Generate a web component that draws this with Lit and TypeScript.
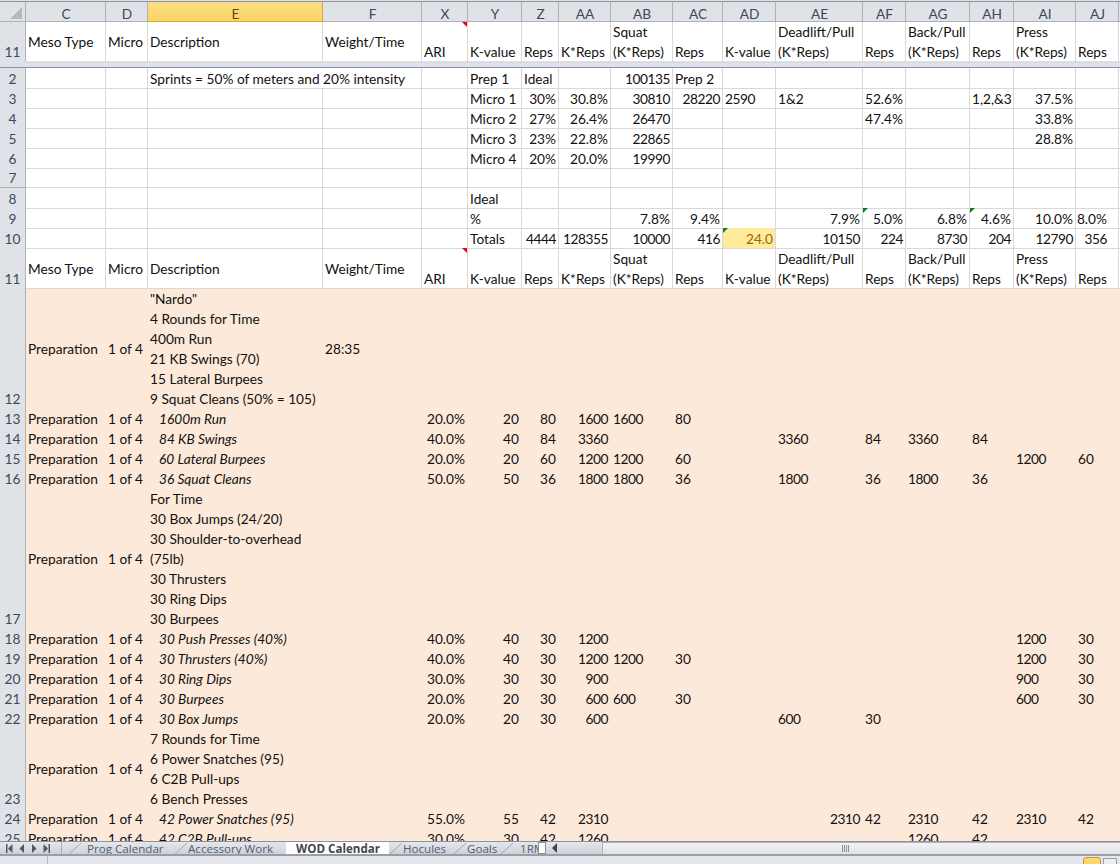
import { LitElement, html, css } from "lit";
import { customElement } from "lit/decorators.js";

const COLS = ["C","D","E","F","X","Y","Z","AA","AB","AC","AD","AE","AF","AG","AH","AI","AJ"];
type Cell = { t: string; a?: "r" | "l"; i?: boolean; cls?: string };
type Row = { n: string; h: number; peach?: boolean; first?: boolean; cells: Record<string, Cell | string> };

const r = (t: string): Cell => ({ t, a: "r" });
const header = (h: number, first = false): Row => ({ n: "11", h, first, cells: {
  C: { t: "Meso Type", cls: "mid" }, D: { t: "Micro", cls: "mid" }, E: { t: "Description", cls: "mid" }, F: { t: "Weight/Time", cls: "mid" },
  X: { t: "ARI", cls: "red" }, Y: "K-value", Z: "Reps", AA: "K*Reps", AB: "Squat\n(K*Reps)", AC: "Reps", AD: "K-value",
  AE: "Deadlift/Pull\n(K*Reps)", AF: "Reps", AG: "Back/Pull\n(K*Reps)", AH: "Reps", AI: "Press\n(K*Reps)", AJ: "Reps",
}});
const wod = (n: string, desc: string, x: string, y: string, z: string, aa: string, rest: Record<string, Cell | string>): Row => ({
  n, h: 20, peach: true, cells: { C: "Preparation", D: "1 of 4", E: { t: desc, i: true }, X: r(x), Y: r(y), Z: r(z), AA: r(aa), ...rest },
});
const block = (n: string, lines: string, h: number, extra: Record<string, Cell | string> = {}): Row => ({
  n, h, peach: true, cells: { C: { t: "Preparation", cls: "mid" }, D: { t: "1 of 4", cls: "mid" }, E: { t: lines, cls: "mid" }, ...extra },
});

const ROWS: Row[] = [
  { n: "2", h: 20, cells: { E: { t: "Sprints = 50% of meters and 20% intensity", cls: "over" }, Y: "Prep 1", Z: "Ideal", AB: r("100135"), AC: "Prep 2" } },
  { n: "3", h: 20, cells: { Y: "Micro 1", Z: r("30%"), AA: r("30.8%"), AB: r("30810"), AC: r("28220"), AD: "2590", AE: "1&2", AF: r("52.6%"), AH: "1,2,&3", AI: r("37.5%") } },
  { n: "4", h: 20, cells: { Y: "Micro 2", Z: r("27%"), AA: r("26.4%"), AB: r("26470"), AF: r("47.4%"), AI: r("33.8%") } },
  { n: "5", h: 20, cells: { Y: "Micro 3", Z: r("23%"), AA: r("22.8%"), AB: r("22865"), AI: r("28.8%") } },
  { n: "6", h: 20, cells: { Y: "Micro 4", Z: r("20%"), AA: r("20.0%"), AB: r("19990") } },
  { n: "7", h: 20, cells: {} },
  { n: "8", h: 20, cells: { Y: "Ideal" } },
  { n: "9", h: 20, cells: { Y: "%", AB: r("7.8%"), AC: r("9.4%"), AE: r("7.9%"), AF: { t: "5.0%", a: "r", cls: "green" }, AG: r("6.8%"), AH: { t: "4.6%", a: "r", cls: "green" }, AI: r("10.0%"), AJ: { t: "8.0%", a: "r", cls: "inset" } } },
  { n: "10", h: 20, cells: { Y: "Totals", Z: r("4444"), AA: r("128355"), AB: r("10000"), AC: r("416"), AD: { t: "24.0", a: "r", cls: "green warn" }, AE: r("10150"), AF: r("224"), AG: r("8730"), AH: r("204"), AI: r("12790"), AJ: { t: "356", a: "r", cls: "inset" } } },
  header(40),
  block("12", '"Nardo"\n4 Rounds for Time\n400m Run\n21 KB Swings (70)\n15 Lateral Burpees\n9 Squat Cleans (50% = 105)', 120, { F: { t: "28:35", cls: "mid" } }),
  wod("13", "1600m Run", "20.0%", "20", "80", "1600", { AB: "1600", AC: "80" }),
  wod("14", "84 KB Swings", "40.0%", "40", "84", "3360", { AE: "3360", AF: "84", AG: "3360", AH: "84" }),
  wod("15", "60 Lateral Burpees", "20.0%", "20", "60", "1200", { AB: "1200", AC: "60", AI: "1200", AJ: "60" }),
  wod("16", "36 Squat Cleans", "50.0%", "50", "36", "1800", { AB: "1800", AC: "36", AE: "1800", AF: "36", AG: "1800", AH: "36" }),
  block("17", "For Time\n30 Box Jumps (24/20)\n30 Shoulder-to-overhead\n(75lb)\n30 Thrusters\n30 Ring Dips\n30 Burpees", 140),
  wod("18", "30 Push Presses (40%)", "40.0%", "40", "30", "1200", { AI: "1200", AJ: "30" }),
  wod("19", "30 Thrusters (40%)", "40.0%", "40", "30", "1200", { AB: "1200", AC: "30", AI: "1200", AJ: "30" }),
  wod("20", "30 Ring Dips", "30.0%", "30", "30", "900", { AI: "900", AJ: "30" }),
  wod("21", "30 Burpees", "20.0%", "20", "30", "600", { AB: "600", AC: "30", AI: "600", AJ: "30" }),
  wod("22", "30 Box Jumps", "20.0%", "20", "30", "600", { AE: "600", AF: "30" }),
  block("23", "7 Rounds for Time\n6 Power Snatches (95)\n6 C2B Pull-ups\n6 Bench Presses", 80),
  wod("24", "42 Power Snatches (95)", "55.0%", "55", "42", "2310", { AE: r("2310"), AF: "42", AG: "2310", AH: "42", AI: "2310", AJ: "42" }),
  wod("25", "42 C2B Pull-ups", "30.0%", "30", "42", "1260", { AG: "1260", AH: "42" }),
];

const TABS = [
  { t: "Prog Calendar", w: 106, pad: 19 },
  { t: "Accessory Work", w: 112, pad: 14 },
  { t: "WOD Calendar", w: 103, pad: 10, active: true },
  { t: "Hocules", w: 64, pad: 14 },
  { t: "Goals", w: 47, pad: 14 },
  { t: "1RM", w: 60, pad: 20 },
];

@customElement("app-root")
export class AppRoot extends LitElement {
  static styles = css`
    :host { display: flex; flex-direction: column; width: 1120px; height: 864px; overflow: hidden; background: #fff;
      font-family: Lato, "Liberation Sans", sans-serif; font-size: 13.7px; color: #111; }
    .top { height: 1px; flex: none; background: #dfe2e7; border-bottom: 1px solid #8f9399; }
    .row { display: grid; flex: none; grid-template-columns: 26px 80px 42px 175px 99px 46px 54px 37px 52px 62px 50px 53px 87px 43px 64px 44px 62px 43px 20px; }
    .heads { height: 20px; background: #dfe3e8; color: #3c4a58; box-shadow: inset 0 -1px 0 #aeb3b9; }
    .head { display: flex; align-items: center; justify-content: center; padding-top: 2px; box-shadow: inset -1px -1px 0 #aeb3b9; box-sizing: border-box; }
    .head.sel { background: linear-gradient(#fbe08a, #fbd35e); box-shadow: inset -1px -1px 0 #d6a83a; color: #5b4a1e; }
    .corner { display: flex; align-items: flex-end; justify-content: flex-end; padding: 0 4px 3px 0; box-shadow: inset -1px -1px 0 #aeb3b9; box-sizing: border-box; }
    .corner svg { display: block; }
    .num { display: flex; align-items: flex-end; justify-content: center; line-height: 20px; background: #dfe3e8; color: #3c4a58; padding-right: 1px;
      box-shadow: inset -1px -1px 0 #aeb3b9; box-sizing: border-box; }
    .c { position: relative; display: flex; align-items: flex-end; padding: 1px 3px 0 2px; line-height: 20px; white-space: pre; min-width: 0;
      box-sizing: border-box; box-shadow: inset -1px -1px 0 #d9d9d9; }
    .c span { display: block; }
    .c.r { justify-content: flex-end; }
    .c.mid { align-items: center; }
    .c.over { box-shadow: inset 0 -1px 0 #d9d9d9; }
    .c.it { padding-left: 11px; font-style: italic; }
    .c.digits span { letter-spacing: -0.45px; }
    .c.inset { padding-right: 12px; }
    .first .c, .first .num { padding-top: 0; padding-bottom: 1px; }
    .peach { background: #fde9d9; }
    .peach .c { box-shadow: none; }
    .c.warn { background: #ffeb9c; color: #9c6500; }
    .c.red::after { content: ""; position: absolute; top: 0; right: 1px; border-top: 5px solid #e8001c; border-left: 5px solid transparent; }
    .c.green::before { content: ""; position: absolute; top: 0; left: 0; border-top: 5px solid #0a7d22; border-right: 5px solid transparent; }
    .band { height: 7px; flex: none; background: #dde3ee; border-bottom: 1px solid #8f9399; box-sizing: border-box; }
    .sheet { flex: 1; min-height: 0; overflow: hidden; display: flex; flex-direction: column; }
    .strip { height: 12px; flex: none; display: flex; background: linear-gradient(#e4e7ec, #ced2d8); border-top: 1px solid #8f9399; border-bottom: 2px solid #9a9ea4;
      font-family: "Open Sans", "Liberation Sans", sans-serif; font-size: 11.6px; color: #4f5f70; }
    .nav { flex: none; width: 62px; height: 100%; position: relative; display: flex; align-items: center; gap: 6px; padding-left: 6px; box-sizing: border-box; box-shadow: inset -1px 0 0 #a8adb3; }
    .nav svg { display: block; }
    .tabs { flex: none; width: 476px; display: flex; overflow: hidden; height: 100%; padding-left: 6px; box-sizing: border-box; }
    .tab { flex: none; position: relative; display: flex; align-items: center; box-sizing: border-box; line-height: 12px; padding-top: 2px; }
    .tab svg { position: absolute; left: 0; top: 0; }
    .tab.on { background: #fff; font-weight: 700; color: #3e4650; }
    .handle { flex: none; width: 8px; height: 12px; background: #fff; border: 1px solid #8a8f96; box-sizing: border-box; }
    .prev { flex: none; width: 56px; display: flex; align-items: center; padding-left: 6px; box-sizing: border-box; }
    .thumb { flex: 1; display: flex; align-items: center; justify-content: center; background: linear-gradient(#f4f5f8, #dfe2e7); box-shadow: inset 1px 1px 0 #b0b4ba; padding-right: 32px; }
    .grip { width: 7px; height: 7px; background: repeating-linear-gradient(90deg, #8a8f96 0 1px, transparent 1px 2px); }
    .status { height: 8px; flex: none; display: flex; background: #e3e6ea; overflow: hidden; }
    .sleft { width: 48px; flex: none; box-shadow: inset -1px 0 0 #b5b9bf; }
    .sbtns { margin-left: auto; display: flex; gap: 2px; padding: 1px 3px 0 0; }
    .b1 { width: 18px; height: 12px; background: #fbd668; border: 1px solid #c49a36; border-radius: 3px; box-sizing: border-box; }
    .b2 { width: 14px; height: 12px; background: #eceef1; border: 1px solid #9a9ea4; box-sizing: border-box; margin-top: 1px; }
  `;

  private cell(col: string, v?: Cell | string) {
    const c: Cell = typeof v === "string" ? { t: v } : v ?? { t: "" };
    const digits = /^\d{3,}$/.test(c.t) ? "digits" : "";
    const cls = ["c", c.a === "r" ? "r" : "", c.i ? "it" : "", digits, c.cls ?? ""].join(" ");
    return html`<div class=${cls} data-col=${col}><span>${c.t}</span></div>`;
  }

  private rowT(row: Row) {
    return html`<div class="row ${row.peach ? "peach" : ""} ${row.first ? "first" : ""}" style="height:${row.h}px">
      <div class="num">${row.n}</div>
      ${COLS.map((k) => this.cell(k, row.cells[k]))}
      ${this.cell("AK")}
    </div>`;
  }

  render() {
    return html`
      <div class="top"></div>
      <div class="row heads">
        <div class="corner"><svg width="12" height="12" viewBox="0 0 12 12"><polygon points="12,0 12,12 0,12" fill="#b4b9bf"></polygon></svg></div>
        ${COLS.map((k) => html`<div class="head ${k === "E" ? "sel" : ""}">${k}</div>`)}
        <div class="head"></div>
      </div>
      <div class="sheet">
        ${this.rowT(header(39, true))}
        <div class="band"></div>
        ${ROWS.map((x) => this.rowT(x))}
      </div>
      <div class="strip">
        <div class="nav">
          <svg width="7" height="9" viewBox="0 0 7 9"><rect x="0" y="0" width="1.5" height="9" fill="#4f5a66"></rect><polygon points="6.5,0 2,4.5 6.5,9" fill="#4f5a66"></polygon></svg>
          <svg width="6" height="9" viewBox="0 0 6 9"><polygon points="5,0 .5,4.5 5,9" fill="#4f5a66"></polygon></svg>
          <svg width="6" height="9" viewBox="0 0 6 9"><polygon points="1,0 5.500,4.500 1,9" fill="#4f5a66"></polygon></svg>
          <svg width="7" height="9" viewBox="0 0 7 9"><polygon points=".5,0 5,4.5 .5,9" fill="#4f5a66"></polygon><rect x="5.500" y="0" width="1.500" height="9" fill="#4f5a66"></rect></svg>
        </div>
        <div class="tabs">
          ${TABS.map((t) => html`<div class="tab ${t.active ? "on" : ""}" style="width:${t.w}px;padding-left:${t.pad}px">
            ${t.active ? "" : html`<svg width="14" height="12" viewBox="0 0 14 12"><path d="M1 12 L13 1" stroke="#a4a9af" fill="none"></path></svg>`}
            ${t.t}
          </div>`)}
        </div>
        <div class="handle"></div>
        <div class="prev"><svg width="6" height="10" viewBox="0 0 6 10"><polygon points="5,0 0,5 5,10" fill="#3c4650"></polygon></svg></div>
        <div class="thumb"><div class="grip"></div></div>
      </div>
      <div class="status">
        <div class="sleft"></div>
        <div class="sbtns"><div class="b1"></div><div class="b2"></div></div>
      </div>
    `;
  }
}
